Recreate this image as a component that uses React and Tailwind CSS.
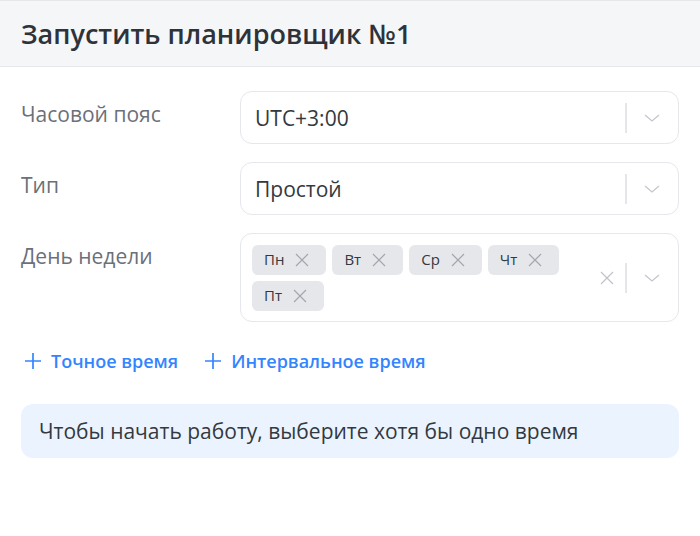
const Chevron = () => (
  <svg width="16" height="8" viewBox="0 0 16 8" fill="none" stroke="#c4c7cc" strokeWidth="1.3" className="shrink-0">
    <path d="M1 1l7 6 7-6" />
  </svg>
);
const Cross = ({ size = 14, color = "#a3a6ad" }) => (
  <svg width={size} height={size} viewBox="0 0 14 14" fill="none" stroke={color} strokeWidth="1.2" className="shrink-0">
    <path d="M1 1l12 12M13 1L1 13" />
  </svg>
);
const Plus = () => (
  <svg width="16" height="16" viewBox="0 0 16 16" fill="none" stroke="#3385ff" strokeWidth="1.7" className="shrink-0">
    <path d="M8 0v16M0 8h16" />
  </svg>
);
const Indicators = ({ clear }) => (
  <div className="flex items-center shrink-0 h-full">
    {clear && <div className="mr-[11px]"><Cross size={14} color="#c0c2c7" /></div>}
    <div className="w-[2px] h-[30px] bg-[#e4e6ea]" />
    <div className="ml-[17px] mr-[18px]"><Chevron /></div>
  </div>
);
const Select = ({ value }) => (
  <div className="flex-1 h-[53px] flex items-center justify-between border border-[#e5e7eb] rounded-[12px] bg-white pl-[14px]">
    <span className="text-[21px] leading-[28px] text-[#333940]">{value}</span>
    <Indicators />
  </div>
);
const Tag = ({ label }) => (
  <div className="h-[30px] flex items-center bg-[#e6e7eb] rounded-[6px] pl-3 pr-[17px] gap-[11px]">
    <span className="text-[15px] leading-[20px] text-[#333940] -mt-[1px]">{label}</span>
    <Cross size={14} color="#a3a6ad" />
  </div>
);
const Row = ({ label, children, cls }) => (
  <div className={`flex ${cls}`}>
    <div className="w-[219px] shrink-0 text-[21px] leading-[28px] text-[#6b7079] pt-[9px]">{label}</div>
    {children}
  </div>
);
export default function App() {
  return (
    <div className="w-[700px] h-[536px] bg-white overflow-hidden font-['Open_Sans',sans-serif]">
      <div className="h-[67px] bg-[#f5f6f8] border-y border-[#e5e7eb] flex items-center px-[21px]">
        <h1 className="text-[27px] leading-[36px] font-semibold text-[#2e333a]">Запустить планировщик №1</h1>
      </div>
      <div className="px-[21px] pt-[24px]">
        <Row label="Часовой пояс"><Select value="UTC+3:00" /></Row>
        <Row label="Тип" cls="mt-[18px]"><Select value="Простой" /></Row>
        <Row label="День недели" cls="mt-[18px]">
          <div className="flex-1 h-[89px] flex items-center justify-between border border-[#e5e7eb] rounded-[12px] bg-white pl-[11px]">
            <div className="flex flex-wrap gap-[6px] w-[320px]">
              <Tag label="Пн" />
              <Tag label="Вт" />
              <Tag label="Ср" />
              <Tag label="Чт" />
              <Tag label="Пт" />
            </div>
            <Indicators clear />
          </div>
        </Row>
        <div className="flex items-center mt-[27px] mb-[31px] h-[24px] pl-[4px]">
          <button className="flex items-center gap-[10px] text-[18px] font-semibold text-[#3385ff]"><Plus />Точное время</button>
          <button className="flex items-center gap-[10px] text-[18px] font-semibold text-[#3385ff] ml-[27px]"><Plus />Интервальное время</button>
        </div>
        <div className="h-[54px] flex items-center bg-[#ebf4fe] rounded-[12px] px-[18px] pt-[2px] text-[21px] text-[#333940]">
          Чтобы начать работу, выберите хотя бы одно время
        </div>
      </div>
    </div>
  );
}
